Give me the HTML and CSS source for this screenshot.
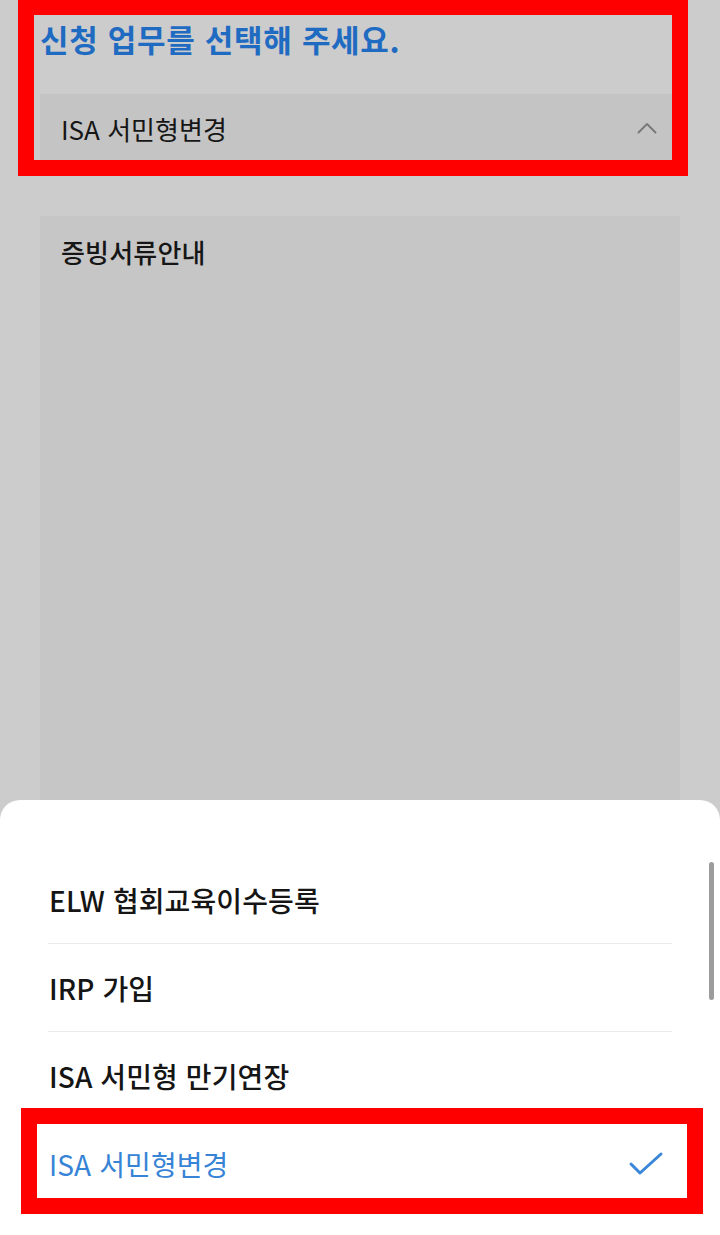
FILE: index.html
```html
<!DOCTYPE html>
<html lang="ko">
<head>
<meta charset="utf-8">
<title>신청 업무 선택</title>
<link rel="stylesheet" href="styles.css">
</head>
<body>
<div class="page">
  <h1 class="title">신청 업무를 선택해 주세요.</h1>
  <div class="select">
    <span class="select-text">ISA 서민형변경</span>
    <svg class="chevron" width="20" height="12" viewBox="0 0 20 12"><polyline points="1.5,10.5 10,2 18.5,10.5" fill="none" stroke="#7a7a7a" stroke-width="2" stroke-linecap="round" stroke-linejoin="round"/></svg>
  </div>
  <div class="card">
    <div class="card-title">증빙서류안내</div>
  </div>
</div>
<div class="mark mark-top"></div>

<div class="sheet">
  <div class="scrollbar"></div>
  <ul class="list">
    <li class="item">ELW 협회교육이수등록</li>
    <li class="item">IRP 가입</li>
    <li class="item">ISA 서민형 만기연장</li>
    <li class="item item-selected">
      <span>ISA 서민형변경</span>
      <svg class="check" width="36" height="26" viewBox="0 0 36 26"><polyline points="3,13 12,22 33,3" fill="none" stroke="#3a86d8" stroke-width="3" stroke-linecap="round" stroke-linejoin="round"/></svg>
    </li>
  </ul>
</div>
<div class="mark mark-bottom"></div>
</body>
</html>
```
FILE: styles.css
```css
* { box-sizing: border-box; }
html, body {
  margin: 0;
  padding: 0;
  width: 720px;
  height: 1235px;
  overflow: hidden;
  background: #cccccc;
  font-family: "Noto Sans CJK KR", "Noto Sans", sans-serif;
  color: #161616;
}
.page {
  padding: 18px 40px 0 40px;
  display: flex;
  flex-direction: column;
}
.title {
  margin: 0;
  font-size: 31px;
  line-height: 42px;
  font-weight: 700;
  color: #1f6bc2;
  letter-spacing: 0.7px;
}
.select {
  margin-top: 34px;
  height: 68px;
  background: #c4c4c4;
  display: flex;
  align-items: center;
  justify-content: space-between;
  padding: 0 23px 0 21px;
}
.select-text {
  font-size: 26px;
  font-weight: 400;
  letter-spacing: 0;
}
.chevron { display: block; }
.card {
  margin-top: 54px;
  height: 700px;
  background: #c6c6c6;
  padding: 18px 21px;
}
.card-title {
  font-size: 26px;
  line-height: 36px;
  font-weight: 500;
  letter-spacing: 0.2px;
}
.mark {
  position: absolute;
  border: 16px solid #ff0000;
  pointer-events: none;
}
.mark-top {
  left: 18px;
  top: -1px;
  width: 670px;
  height: 177px;
}
.mark-bottom {
  left: 21px;
  top: 1108px;
  width: 682px;
  height: 106px;
}
.sheet {
  position: absolute;
  left: 0;
  top: 800px;
  width: 720px;
  height: 435px;
  background: #ffffff;
  border-radius: 20px 20px 0 0;
  padding: 56px 48px 0 48px;
}
.scrollbar {
  position: absolute;
  right: 6px;
  top: 62px;
  width: 5px;
  height: 138px;
  border-radius: 3px;
  background: #9c9c9c;
}
.list {
  list-style: none;
  margin: 0;
  padding: 0;
}
.item {
  height: 88px;
  border-bottom: 1px solid #ebebeb;
  display: flex;
  align-items: center;
  justify-content: space-between;
  font-size: 28px;
  font-weight: 500;
  letter-spacing: 0.1px;
  color: #151515;
  padding: 0 8px 0 1px;
}
.item-selected {
  color: #3784d6;
  font-weight: 400;
  border-bottom: none;
}
.check { display: block; }
```
